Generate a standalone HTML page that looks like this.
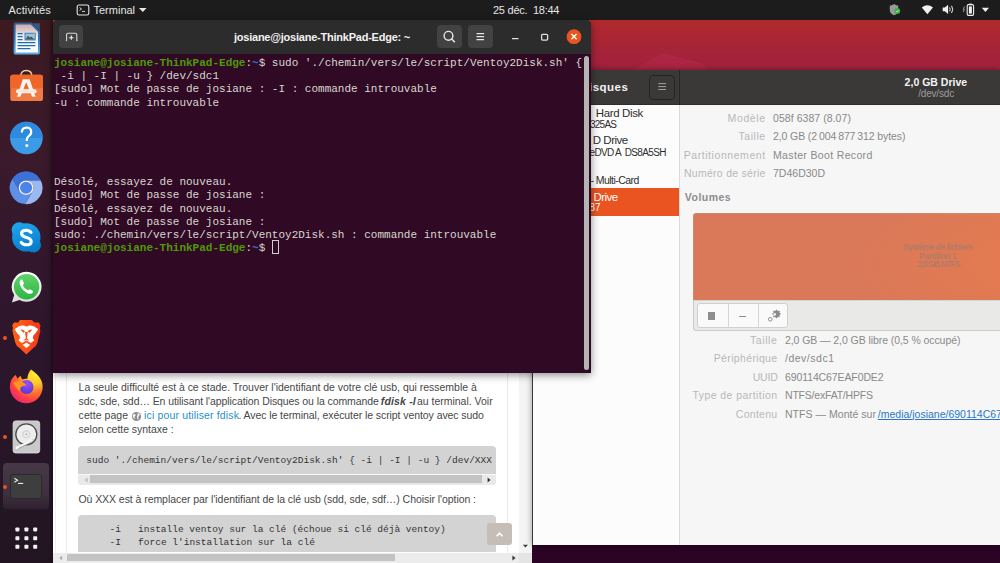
<!DOCTYPE html>
<html><head><meta charset="utf-8">
<style>
*{box-sizing:border-box;margin:0;padding:0}
html,body{width:1000px;height:563px;overflow:hidden;background:#2b0425}
body{position:relative;font-family:"Liberation Sans",sans-serif}
.a{position:absolute}
.pre{white-space:pre}
#wall{left:0;top:0;width:1000px;height:563px;background:linear-gradient(180deg,#b0292c 20px,#a82536 45px,#a1203f 70px,#8a1a45 200px,#2b0425 540px)}
#topbar{left:0;top:0;width:1000px;height:20px;background:#1c1c1c;color:#e8e8e8;font-size:11px}
#dock{left:0;top:20px;width:53px;height:543px;background:linear-gradient(180deg,#3d1a1f 0px,#3c1a25 40px,#3a1a2b 140px,#2f162d 290px,#29162a 392px,#221521 543px)}
#browser{left:53px;top:300px;width:479px;height:263px;background:#fff}
#disks{left:532px;top:70px;width:468px;height:475px;background:#f6f6f6;box-shadow:0 0 6px rgba(0,0,0,0.4)}
#term{left:53px;top:20px;width:538px;height:352.5px;background:#300a24;border-radius:5px 5px 0 0;overflow:hidden;box-shadow:0 2px 9px rgba(0,0,0,0.45)}
#thead{left:0;top:0;width:538px;height:34px;background:#2c2c2c}
.tl{position:absolute;left:1px;font-family:"Liberation Mono",monospace;font-size:11px;color:#d9d6d0;white-space:pre;line-height:13px}
.g{color:#4e9a06;font-weight:bold}
.b{color:#3f74c4;font-weight:bold}
.btn{background:#424242;border-radius:4px}
.ttl{left:0;width:538px;text-align:center;top:10px;font-size:11px;font-weight:bold;color:#f2f2f2;letter-spacing:-0.23px;line-height:14px}
.tb{top:2.8px;font-size:11px;line-height:14px;color:#e6e6e6}
.dot{left:3px;width:4px;height:4px;border-radius:2px;background:#e95420}
.P{font-size:10.5px;line-height:13px;color:#474747}
.C{font-family:"Liberation Mono",monospace;font-size:9.5px;line-height:12px;color:#343434}
.S1{font-size:11.5px;line-height:14px;color:#2e2e2e}
.S2{font-size:10px;line-height:12px;color:#2e2e2e}
.L{font-size:10.5px;line-height:13px;color:#b8b8b8}
.V{font-size:10.5px;line-height:13px;color:#898989}
.VT{font-size:8.5px;line-height:10px;font-weight:bold;color:rgba(125,125,125,0.5);filter:blur(0.35px)}
.cur{outline:1px solid #d0d0d0;outline-offset:-1px}
</style></head><body>
<div id="wall" class="a"></div>
<svg class="a" style="left:0;top:0" width="1000" height="80" viewBox="0 0 1000 80"><path d="M630 71 L663 53 L704 64 L706 71 Z" fill="#ae2845" opacity="0.8"></path></svg>
<div id="topbar" class="a">
  <div class="a pre tb" style="left:8.5px;letter-spacing:0.15px">Activités</div>
  <svg class="a" style="left:76px;top:4px" width="14" height="12" viewBox="0 0 14 12"><rect x="1.2" y="1" width="11.6" height="10" rx="1.8" fill="none" stroke="#e8e8e8" stroke-width="1.1"></rect><path d="M3.6 3.6 L5.6 5 L3.6 6.4 M6 7.4 h3" fill="none" stroke="#e8e8e8" stroke-width="0.9"></path></svg>
  <div class="a pre tb" style="left:93.5px;letter-spacing:0px">Terminal</div>
  <svg class="a" style="left:138px;top:7px" width="10" height="6" viewBox="0 0 10 6"><path d="M1 1 H8.6 L4.8 5 Z" fill="#e8e8e8"></path></svg>
  <div class="a pre tb" style="left:493px;letter-spacing:-0.25px">25 déc.  18:44</div>
  <svg class="a" style="left:886px;top:2px" width="110" height="16" viewBox="0 0 110 16">
    <path d="M8.2 2 C6.4 3.2 5 3.6 3.8 3.6 V8.2 C3.8 10.8 5.6 12.2 8.2 13.2 C10.8 12.2 12.2 10.8 12.2 8.2 V3.6 C11 3.6 9.8 3.2 8.2 2 Z" fill="#9a9a9a"></path>
    <circle cx="11.2" cy="9" r="3" fill="#3cb043"></circle><path d="M9.8 9 l1 1 l1.8 -1.8" stroke="#e8ffe8" stroke-width="0.7" fill="none"></path>
    <path d="M41.4 12.2 L35.8 5.4 Q41.4 1.2 47 5.4 Z" fill="#f0f0f0"></path>
    <path d="M56.7 5.5 h2.2 l3.2 -2.7 v9.2 l-3.2 -2.7 h-2.2 Z" fill="#f0f0f0"></path>
    <path d="M63.6 5.4 Q64.8 7.4 63.6 9.4 M65.6 3.8 Q67.8 7.4 65.6 11" fill="none" stroke="#f0f0f0" stroke-width="1"></path>
    <path d="M78.4 4.5 L77.3 7.4 L78.4 7.4 L77.3 10.2" fill="none" stroke="#cfcfcf" stroke-width="0.7"></path>
    <rect x="81.2" y="2.6" width="6.4" height="10.8" rx="1.3" fill="none" stroke="#f0f0f0" stroke-width="1.1"></rect><rect x="83" y="1.6" width="2.8" height="1.2" fill="#f0f0f0"></rect><rect x="82.9" y="4.4" width="3" height="7.2" fill="#f0f0f0"></rect>
    <path d="M95.8 5.8 H103 L99.4 10 Z" fill="#f0f0f0"></path>
  </svg>
</div>
<div id="dock" class="a">
  <div class="a" style="left:49px;top:0;width:4px;height:543px;background:linear-gradient(90deg,rgba(0,0,0,0),rgba(0,0,0,0.3))"></div>
  <!-- writer: abs x13-40 y22.5-54.6 -->
  <svg class="a" style="left:12px;top:1px" width="30" height="35" viewBox="0 0 30 35">
    <defs><linearGradient id="wg" x1="0" y1="0" x2="0" y2="1"><stop offset="0" stop-color="#c9a9ae"></stop><stop offset="0.45" stop-color="#f4eef0"></stop><stop offset="1" stop-color="#fff"></stop></linearGradient>
    <linearGradient id="wb" x1="0" y1="0" x2="0" y2="1"><stop offset="0" stop-color="#2e5f8e"></stop><stop offset="0.5" stop-color="#2a78b8"></stop><stop offset="1" stop-color="#5ab4e6"></stop></linearGradient></defs>
    <path d="M20.6 2.2 H27.8 V9.4 Z" fill="#3a5a78"></path>
    <path d="M3.6 1.6 H19.6 L28 10 V31 Q28 33.6 25.4 33.6 H4.2 Q1.6 33.6 1.6 31 V4 Q1.6 1.6 3.6 1.6 Z" fill="url(#wb)"></path>
    <path d="M4.4 3.6 H18.8 L26 10.8 V30.4 Q26 31.6 24.8 31.6 H4.8 Q3.6 31.6 3.6 30.4 V4.4 Q3.6 3.6 4.4 3.6 Z" fill="url(#wg)"></path>
    <path d="M5.6 12.6 h5 M5.6 15.6 h5 M5.6 18.6 h5 M5.6 21.6 h17.8 M5.6 24.6 h17.8 M5.6 27.6 h12.8" stroke="#1a6fb3" stroke-width="1.3"></path>
    <rect x="12.6" y="11.8" width="11" height="7.6" fill="#1f6fb0"></rect><rect x="13.4" y="12.6" width="9.4" height="6" fill="#8fc9ea"></rect>
    <path d="M13.4 18.6 L16 14.6 L17.6 16.6 L19 15.4 L22.8 18.6 Z" fill="#555"></path><circle cx="22" cy="13.4" r="0.9" fill="#f0c030"></circle>
  </svg>
  <!-- software: bag x10-42.7 y74.7-101.5, handle top 70.3 -->
  <svg class="a" style="left:9px;top:49px" width="35" height="34" viewBox="0 0 35 34">
    <path d="M11.8 7 Q11.8 1.6 17.3 1.6 Q22.8 1.6 22.8 7" fill="none" stroke="#ecd0a0" stroke-width="1.5"></path>
    <rect x="1.3" y="5.7" width="32.7" height="26.3" rx="2.6" fill="#f07a42"></rect>
    <path d="M1.3 8.3 Q1.3 5.7 3.9 5.7 H31.4 Q34 5.7 34 8.3 V19.2 H1.3 Z" fill="#ef6629"></path>
    <path d="M13.8 10.3 H20.6 L26.6 27.7 H23.1 L17.2 13.2 L11.4 27.7 H8 Z" fill="#fbf3ee"></path>
    <rect x="7" y="20.2" width="20.6" height="4" rx="2" fill="#fbf3ee"></rect>
    <path d="M9 22.2 H25.6" stroke="#f2c8b8" stroke-width="0.6"></path>
  </svg>
  <!-- help: center 26.4,138 r16.3 -->
  <svg class="a" style="left:9px;top:100px" width="36" height="36" viewBox="0 0 36 36">
    <circle cx="17.4" cy="18" r="16.3" fill="#3b9be6"></circle>
    <path d="M1.1 18 A16.3 16.3 0 0 1 33.7 18 Z" fill="#2e8ade"></path>
    <path d="M12.8 12.6 Q12.8 7.6 17.6 7.6 Q22.2 7.6 22.2 12 Q22.2 14.6 19.6 16.2 Q17.8 17.4 17.8 20 V21" fill="none" stroke="#fff" stroke-width="2.2"></path>
    <circle cx="17.8" cy="25.4" r="1.5" fill="#fff"></circle>
  </svg>
  <!-- chromium: center 26.3,187.6 r16.5 -->
  <svg class="a" style="left:9px;top:150px" width="36" height="36" viewBox="0 0 36 36">
    <path d="M10.78 21.40 L3.44 8.68 A16.4 16.4 0 0 1 31.79 10.45 L17.10 10.45 A7.3 7.3 0 0 0 10.78 21.40 Z" fill="#3e71d8"></path>
    <path d="M17.10 10.45 L31.79 10.45 A16.4 16.4 0 0 1 16.08 34.12 L23.42 21.40 A7.3 7.3 0 0 0 17.10 10.45 Z" fill="#9ab8f2"></path>
    <path d="M23.42 21.40 L16.08 34.12 A16.4 16.4 0 0 1 3.44 8.68 L10.78 21.40 A7.3 7.3 0 0 0 23.42 21.40 Z" fill="#5e90ea"></path>
    <circle cx="17.1" cy="17.75" r="6.7" fill="#4a84ea" stroke="#f4f6fb" stroke-width="1.3"></circle>
  </svg>
  <!-- skype x10.7-41.8 y222-252.4 -->
  <svg class="a" style="left:10px;top:201px" width="33" height="33" viewBox="0 0 33 33">
    <defs><linearGradient id="sk" x1="0" y1="0" x2="0.3" y2="1"><stop offset="0" stop-color="#20a8ec"></stop><stop offset="1" stop-color="#0a7fd0"></stop></linearGradient></defs>
    <circle cx="9.2" cy="8.8" r="7.6" fill="#1ca2e8"></circle>
    <circle cx="23.4" cy="24" r="7.6" fill="#0b7ccc"></circle>
    <circle cx="16.3" cy="16.4" r="14.2" fill="url(#sk)"></circle>
    <path d="M21 11.4 Q19.4 9.2 16.2 9.2 Q11.6 9.2 11.6 12.6 Q11.6 15.2 15.6 16.2 Q21.2 17.4 21.2 20.4 Q21.2 23.8 16.2 23.8 Q12.8 23.8 11.2 21.4" fill="none" stroke="#fff" stroke-width="3.1" stroke-linecap="round"></path>
  </svg>
  <!-- whatsapp x11.1-41.6 y271.9-302.4 -->
  <svg class="a" style="left:10px;top:250px" width="34" height="34" viewBox="0 0 34 34">
    <defs><linearGradient id="wa" x1="0" y1="0" x2="0" y2="1"><stop offset="0" stop-color="#62d36c"></stop><stop offset="1" stop-color="#2ab540"></stop></linearGradient>
    <linearGradient id="wb2" x1="0" y1="0" x2="0" y2="1"><stop offset="0" stop-color="#ffffff"></stop><stop offset="1" stop-color="#dcdcdc"></stop></linearGradient></defs>
    <path d="M16.6 1.8 A15 15 0 1 1 9.4 30 L1.9 32.4 L4.2 25 A15 15 0 0 1 16.6 1.8 Z" fill="url(#wb2)"></path>
    <circle cx="16.6" cy="16.75" r="12.7" fill="url(#wa)"></circle>
    <path d="M10.8 9.6 Q9 11.4 9.9 14.6 Q11.6 20.2 17.8 23.4 Q21 24.6 22.8 22.6 Q23.6 21.4 22.6 20.8 L20.2 19.4 Q19.4 19 18.9 19.7 L18.2 20.6 Q14.4 18.8 12.8 15.2 L13.6 14.3 Q14.1 13.7 13.8 13 L12.6 10.2 Q12 9.2 10.8 9.6 Z" fill="#fff"></path>
  </svg>
  <!-- brave x11.8-40.8 y318.6-354.6 -->
  <svg class="a" style="left:11px;top:298px" width="31" height="38" viewBox="0 0 31 38">
    <defs><linearGradient id="bg" x1="0" y1="0" x2="1" y2="0"><stop offset="0" stop-color="#ff6414"></stop><stop offset="0.5" stop-color="#fb4e16"></stop><stop offset="1" stop-color="#f5341c"></stop></linearGradient></defs>
    <path d="M8.7 1.9 H20.8 L23.4 4.4 L27.8 4.6 L29.6 7.6 L28.8 10 L29.4 12.4 L26.6 24.4 Q25.8 27.6 22.2 30 L15.4 36.6 L8.6 30 Q5 27.6 4.2 24.4 L1.4 12.4 L2 10 L1.2 7.6 L3 4.6 L7.4 4.4 Z" fill="url(#bg)"></path>
    <path d="M5 10.2 Q8.4 7 12.4 7.6 L15.4 8.6 L18.4 7.6 Q22.4 7 25.8 10.2 L27.2 11 L24.8 15 L22.2 17.8 L21.8 20.2 L23.4 22.2 L19.8 25 L15.4 22.4 L11 25 L7.4 22.2 L9 20.2 L8.6 17.8 L6 15 L3.6 11 Z" fill="#fff"></path>
    <path d="M11.6 27 L15.4 24.6 L19.2 27 L15.4 30 Z" fill="#fff"></path>
    <path d="M9.4 11.6 Q12 11.6 14 13 L12.6 15 Q11 13.4 9.4 11.6 Z M21.4 11.6 Q18.8 11.6 16.8 13 L18.2 15 Q19.8 13.4 21.4 11.6 Z M14 13.4 L15.4 14.2 L16.8 13.4 L16 20.6 L18.6 22.8 L15.4 22 L12.2 22.8 L14.8 20.6 Z" fill="#fb5016"></path>
  </svg>
  <!-- firefox x10-42.6 y368.6-402.8 -->
  <svg class="a" style="left:9px;top:347px" width="36" height="38" viewBox="0 0 36 38">
    <defs><radialGradient id="ff" cx="0.78" cy="0.12" r="1.05"><stop offset="0" stop-color="#fff03c"></stop><stop offset="0.3" stop-color="#ffc42a"></stop><stop offset="0.55" stop-color="#ff7030"></stop><stop offset="0.78" stop-color="#ff3a48"></stop><stop offset="1" stop-color="#e21f8e"></stop></radialGradient>
    <radialGradient id="fp" cx="0.55" cy="0.25" r="0.8"><stop offset="0" stop-color="#a04cf8"></stop><stop offset="1" stop-color="#4f3ad2"></stop></radialGradient></defs>
    <path d="M22 2.5 C27.5 6.5 33.7 11.5 33.7 19.8 A16.4 16.4 0 0 1 0.9 19.8 C0.9 14.4 3.4 10 6.8 8 L8.4 11.8 L11.4 8.7 L13.2 12.4 C15 11.6 17 11.6 18.4 11.8 C18.4 8.4 20 4.8 22 2.5 Z" fill="url(#ff)"></path>
    <circle cx="17.6" cy="20" r="6.9" fill="url(#fp)"></circle>
    <path d="M4.2 16 Q8.6 13.4 12.4 14.6 Q15.6 15.6 17.6 18.4 Q13.6 18.2 11.8 20.2 Q10.6 22.4 11.2 24.6 Q7 21.6 4.2 16 Z" fill="#ff9420"></path>
  </svg>
  <!-- disks x13.2-40 y420.4-452.8 -->
  <svg class="a" style="left:12px;top:399px" width="30" height="36" viewBox="0 0 30 36">
    <rect x="1.1" y="1.9" width="26.6" height="32.1" rx="2.6" fill="#c9c9c9" stroke="#e2e2e2" stroke-width="0.8"></rect>
    <circle cx="14.3" cy="15.3" r="10.5" fill="#ededed" stroke="#4a4a4a" stroke-width="1.3"></circle>
    <circle cx="14.3" cy="15.3" r="3.4" fill="none" stroke="#d8d8d8" stroke-width="1.6"></circle>
    <circle cx="14.3" cy="15.3" r="0.7" fill="#8a8a8a"></circle>
    <path d="M5.2 29.2 L20.2 21.8" stroke="#9a9a9a" stroke-width="2.6" stroke-linecap="round"></path>
    <path d="M5 28.7 L19.9 21.3" stroke="#fafafa" stroke-width="1.9" stroke-linecap="round"></path>
    <circle cx="5" cy="28.7" r="1.5" fill="#fafafa"></circle>
  </svg>
  <!-- terminal highlight -->
  <div class="a" style="left:3px;top:443px;width:46px;height:46px;border-radius:4px;background:linear-gradient(180deg,rgba(255,255,255,0.15),rgba(255,255,255,0.11) 70%,rgba(255,255,255,0.05))"></div>
  <div class="a" style="left:10px;top:454px;width:32px;height:25px;border-radius:3px;background:#3e3e3e;border:1px solid #2a2a2a"></div>
  <svg class="a" style="left:10px;top:454px" width="32" height="25" viewBox="0 0 32 25"><path d="M4.4 4.2 L7.6 6.2 L4.4 8.2" fill="none" stroke="#eee" stroke-width="1.1"></path><path d="M8 9.4 h5.2" stroke="#eee" stroke-width="1.1"></path></svg>
  <!-- app grid -->
  <svg class="a" style="left:13px;top:505px" width="27" height="27" viewBox="0 0 27 27">
    <g fill="#f2f2f2"><rect x="2.4" y="2.4" width="4" height="4" rx="0.8"></rect><rect x="11.4" y="2.4" width="4" height="4" rx="0.8"></rect><rect x="20.2" y="2.4" width="4" height="4" rx="0.8"></rect>
    <rect x="2.4" y="11.2" width="4" height="4" rx="0.8"></rect><rect x="11.4" y="11.2" width="4" height="4" rx="0.8"></rect><rect x="20.2" y="11.2" width="4" height="4" rx="0.8"></rect>
    <rect x="2.4" y="19.8" width="4" height="4" rx="0.8"></rect><rect x="11.4" y="19.8" width="4" height="4" rx="0.8"></rect><rect x="20.2" y="19.8" width="4" height="4" rx="0.8"></rect></g>
  </svg>
  <div class="a dot" style="top:315.5px"></div>
  <div class="a dot" style="top:415px"></div>
  <div class="a dot" style="top:464.5px"></div>
</div>
<div id="browser" class="a">
  <div class="a" style="left:1.5px;top:0;width:1px;height:263px;background:#f1f1f1"></div>
  <div class="a" style="left:13px;top:0;width:1px;height:263px;background:#e9e9e9"></div>
  <div class="a" style="left:454px;top:0;width:1px;height:263px;background:#e9e9e9"></div>
  <div class="a pre P" style="left: 25.6px; top: 80.5px; letter-spacing: -0.019px;">La seule difficulté est à ce stade. Trouver l'identifiant de votre clé usb, qui ressemble à</div>
  <div class="a pre P" style="left: 25.6px; top: 94.8px; letter-spacing: -0.083px;">sdc, sde, sdd… En utilisant l'application Disques ou la commande</div>
  <div class="a pre P" style="font-weight: bold; font-style: italic; left: 327.8px; top: 94.8px; letter-spacing: 0.151px;">fdisk -l</div>
  <div class="a pre P" style="left: 363.9px; top: 94.8px; letter-spacing: -0.005px;">au terminal. Voir</div>
  <div class="a pre P" style="left: 25.6px; top: 109.1px; letter-spacing: 0.039px;">cette page</div>
  <svg class="a" style="left:78.4px;top:110.6px" width="11" height="11" viewBox="0 0 11 11"><circle cx="5.5" cy="5.5" r="4.6" fill="#8c8c8c"></circle><path d="M2.4 3.2 Q4 2.4 4.6 3.6 Q5 5 3.6 5.6 Q3.4 7 4.4 8.2 Q2 7.4 1.6 5 Z M6.4 1.4 Q8.6 2.4 9 4 Q7.8 4.6 7.4 6 Q8 7.6 7 9 Q6 8 6.2 6.4 Q5.4 5.6 6.4 4.2 Q7 3 6.4 1.4 Z" fill="#f4f4f4"></path></svg>
  <div class="a pre P" style="color: rgb(42, 143, 199); left: 91px; top: 109.1px; letter-spacing: 0.153px;">ici pour utiliser fdisk</div>
  <div class="a pre P" style="left: 185.4px; top: 109.1px; letter-spacing: -0.076px;">. Avec le terminal, exécuter le script ventoy avec sudo</div>
  <div class="a pre P" style="left: 25.6px; top: 123.4px; letter-spacing: -0.037px;">selon cette syntaxe :</div>
  <div class="a" style="left:25px;top:146px;width:418px;height:39px;background:#d3d3d3;border-radius:4px;overflow:hidden">
    <div class="a" style="left:0;top:27.5px;width:418px;height:11.5px;background:#e9e9e9;border-top:1px solid #f7f7f7"></div>
    <div class="a" style="left:12px;top:28.8px;width:392px;height:8.6px;background:#c3c3c3"></div>
    <svg class="a" style="left:3px;top:28.5px" width="412" height="10" viewBox="0 0 412 10"><path d="M6.6 2.6 L3.6 5 L6.6 7.4 Z" fill="#bcbcbc"></path><path d="M406.6 2.6 L409.6 5 L406.6 7.4 Z" fill="#333"></path></svg>
  </div>
  <div class="a pre C" style="left: 33.3px; top: 154.8px; letter-spacing: 0.013px;">sudo './chemin/vers/le/script/Ventoy2Disk.sh' { -i | -I | -u } /dev/XXX</div>
  <div class="a pre P" style="left: 25.4px; top: 193.4px; letter-spacing: -0.056px;">Où XXX est à remplacer par l'identifiant de la clé usb (sdd, sde, sdf…) Choisir l'option :</div>
  <div class="a" style="left:25px;top:215px;width:418px;height:36.6px;background:#d3d3d3;border-radius:4px 4px 0 0"></div>
  <div class="a pre C" style="left: 56.6px; top: 223.6px; letter-spacing: -0.004px;">-i   installe ventoy sur la clé (échoue si clé déjà ventoy)</div>
  <div class="a pre C" style="left: 56.6px; top: 236.8px;">-I   force l'installation sur la clé</div>
  <div class="a" style="left:434px;top:223px;width:24.5px;height:21.5px;background:#c6bdb7;border-radius:3px"></div>
  <svg class="a" style="left:434px;top:223px" width="25" height="22" viewBox="0 0 25 22"><path d="M9.6 13.2 L12.6 10.2 L15.6 13.2" fill="none" stroke="#fff" stroke-width="1.6"></path></svg>
  <div class="a" style="left:466px;top:0;width:13px;height:252.5px;background:#f4f4f4"></div>
  <svg class="a" style="left:466px;top:240px" width="13" height="12" viewBox="0 0 13 12"><path d="M3.8 4.8 H9 L6.4 7.6 Z" fill="#3a3a3a"></path></svg>
  <div class="a" style="left:0;top:252.5px;width:466px;height:10.5px;background:#ececec"></div>
  <div class="a" style="left:14px;top:253.6px;width:328px;height:7.6px;background:#c3c3c3"></div>
  <svg class="a" style="left:0;top:252.5px" width="466" height="11" viewBox="0 0 466 11"><path d="M9.2 2.4 L6.2 5 L9.2 7.6 Z" fill="#b0b0b0"></path><path d="M459.4 2.4 L462.6 5 L459.4 7.6 Z" fill="#3a3a3a"></path></svg>
  <div class="a" style="left:466px;top:252.5px;width:13px;height:10.5px;background:#e4e4e4"></div>
</div>
<div id="disks" class="a">
  <div class="a" style="left:0;top:0;width:468px;height:35px;background:#3b3938;border-bottom:1px solid #2e2d2c"></div>
  <div class="a" style="left:147px;top:0;width:1px;height:35px;background:#262626"></div>
  <div class="a pre" style="font-size: 11.5px; line-height: 14px; font-weight: bold; color: rgb(242, 242, 242); left: 57px; top: 9.8px; letter-spacing: 0.472px;">isques</div>
  <div class="a" style="left:116.6px;top:5.1px;width:26.2px;height:24.6px;border:1px solid #252423;border-radius:4px;background:#3b3938"></div>
  <svg class="a" style="left:116.6px;top:5.1px" width="27" height="25" viewBox="0 0 27 25"><path d="M9.3 8.6 h7.7 M9.3 11.6 h7.7 M9.3 14.5 h7.7" stroke="#a0a0a0" stroke-width="1"></path></svg>
  <div class="a pre" style="font-size: 10.5px; line-height: 14px; font-weight: bold; color: rgb(244, 244, 244); left: 372.6px; top: 4.6px; letter-spacing: 0.013px;">2,0 GB Drive</div>
  <div class="a pre" style="font-size: 10px; line-height: 13px; color: rgb(156, 156, 156); left: 386.2px; top: 17.2px; letter-spacing: -0.179px;">/dev/sdc</div>
  <div class="a" style="left:0;top:35px;width:148px;height:440px;background:#fcfcfc;border-right:1px solid #dadada"></div>
  <div class="a" style="left:0;top:0;width:1px;height:475px;background:#383838"></div>
  <div class="a pre S1" style="left: 63.7px; top: 36.3px; letter-spacing: -0.361px;">Hard Disk</div>
  <div class="a pre S2" style="left: 58px; top: 48.8px; letter-spacing: -0.758px;">325AS</div>
  <div class="a pre S1" style="left: 60.8px; top: 63.4px; letter-spacing: -0.491px;">D Drive</div>
  <div class="a pre S2" style="left: 57.5px; top: 76.6px; letter-spacing: -0.661px;">eDVD A  DS8A5SH</div>
  <div class="a pre S2" style="font-size: 10.5px; left: 58.5px; top: 104px; letter-spacing: -0.549px;">- Multi-Card</div>
  <div class="a" style="left:0;top:118.4px;width:147px;height:27.6px;background:#e95420"></div>
  <div class="a pre S1" style="color: rgb(255, 255, 255); left: 61.4px; top: 120px; letter-spacing: -0.511px;">Drive</div>
  <div class="a pre S2" style="color: rgb(255, 255, 255); left: 57.5px; top: 132px;">87</div>
  <div class="a pre L" style="left: 195.606px; top: 42px; letter-spacing: 0.609px;">Modèle</div>
  <div class="a pre V" style="left: 241px; top: 42px; letter-spacing: 0.056px;">058f 6387 (8.07)</div>
  <div class="a pre L" style="left: 206.45px; top: 60.3px; letter-spacing: 0.552px;">Taille</div>
  <div class="a pre V" style="left: 241px; top: 60.3px; letter-spacing: -0.108px;">2,0 GB (2 004 877 312 bytes)</div>
  <div class="a pre L" style="left: 151.731px; top: 78.8px; letter-spacing: 0.561px;">Partitionnement</div>
  <div class="a pre V" style="left: 241px; top: 78.8px; letter-spacing: 0.349px;">Master Boot Record</div>
  <div class="a pre L" style="left: 152.028px; top: 96.8px; letter-spacing: 0.27px;">Numéro de série</div>
  <div class="a pre V" style="left: 241px; top: 96.8px; letter-spacing: 0.007px;">7D46D30D</div>
  <div class="a pre" style="font-size: 10.5px; line-height: 13px; font-weight: bold; color: rgb(141, 141, 141); left: 152.8px; top: 120.8px; letter-spacing: 0.486px;">Volumes</div>
  <div class="a" style="left:161.4px;top:142.8px;width:320px;height:88.4px;background:radial-gradient(ellipse 260px 90px at 400px 50px,#ec7a4e 0%,#e27a52 45%,#d9795a 100%);border:1px solid #c98a70;border-bottom:none;border-radius:3px 0 0 0"></div>
  <div class="a" style="left:161.4px;top:230.4px;width:320px;height:30.6px;background:#e9e9e8;border:1px solid #cbcbcb;border-top:1px solid #d5d5d5;border-radius:0 0 0 3px"></div>
  <div class="a" style="left:164.5px;top:233.3px;width:91.6px;height:25.2px;background:#fafafa;border:1px solid #d0d0d0;border-radius:3px"></div>
  <div class="a" style="left:195.7px;top:234px;width:1px;height:24px;background:#d6d6d6"></div>
  <div class="a" style="left:226.1px;top:234px;width:1px;height:24px;background:#d6d6d6"></div>
  <div class="a" style="left:175.8px;top:242.2px;width:7.6px;height:7.4px;background:#8e8e8e"></div>
  <div class="a" style="left:206.5px;top:245.8px;width:7.8px;height:1px;background:#8e8e8e"></div>
  <svg class="a" style="left:234px;top:238px" width="16" height="16" viewBox="0 0 16 16"><g fill="#8a8a8a"><path d="M8.6 2.2 h1.8 l0.3 1.3 l1.2 0.5 l1.1 -0.8 l1.3 1.3 l-0.8 1.1 l0.5 1.2 l1.3 0.3 v1.8 l-1.3 0.3 l-0.5 1.2 l0.8 1.1 l-1.3 1.3 l-1.1 -0.8 l-1.2 0.5 l-0.3 1.3 h-1.8 l-0.3 -1.3 l-1.2 -0.5 l-1.1 0.8 l-1.3 -1.3 l0.8 -1.1 l-0.5 -1.2 l-1.3 -0.3 v-1.8 l1.3 -0.3 l0.5 -1.2 l-0.8 -1.1 l1.3 -1.3 l1.1 0.8 l1.2 -0.5 Z" transform="translate(1.2 0.2) scale(0.72) translate(3.4 0)"></path></g><circle cx="8.7" cy="6.4" r="1.3" fill="#f4f4f4"></circle><circle cx="4.3" cy="11.3" r="1.8" fill="none" stroke="#8a8a8a" stroke-width="1"></circle></svg>
  <div class="a pre VT" style="left: 371.4px; top: 172.2px; letter-spacing: -0.548px;">Système de fichiers</div>
  <div class="a pre VT" style="left: 387.6px; top: 180.6px; letter-spacing: -0.396px;">Partition 1</div>
  <div class="a pre VT" style="left: 385.8px; top: 189px; letter-spacing: -0.848px;">2,0 GB NTFS</div>
  <div class="a pre L" style="left: 217.891px; top: 264.2px; letter-spacing: 0.613px;">Taille</div>
  <div class="a pre V" style="left: 253px; top: 264.2px; letter-spacing: -0.074px;">2,0 GB — 2,0 GB libre (0,5 % occupé)</div>
  <div class="a pre L" style="left: 181.75px; top: 282.4px; letter-spacing: 0.35px;">Périphérique</div>
  <div class="a pre V" style="left: 253px; top: 282.4px; letter-spacing: 0.506px;">/dev/sdc1</div>
  <div class="a pre L" style="left: 220.719px; top: 301px; letter-spacing: -0.224px;">UUID</div>
  <div class="a pre V" style="left: 253px; top: 301px; letter-spacing: -0.108px;">690114C67EAF0DE2</div>
  <div class="a pre L" style="left: 160.469px; top: 319.2px; letter-spacing: 0.435px;">Type de partition</div>
  <div class="a pre V" style="left: 253px; top: 319.2px; letter-spacing: -0.202px;">NTFS/exFAT/HPFS</div>
  <div class="a pre L" style="left: 203.812px; top: 337.8px; letter-spacing: 0.283px;">Contenu</div>
  <div class="a pre V" style="left: 253px; top: 337.8px; letter-spacing: 0.037px;">NTFS — Monté sur</div>
  <div class="a pre V" style="color: rgb(42, 118, 198); text-decoration: underline; left: 345.8px; top: 337.8px;">/media/josiane/690114C67EAF0DE2</div>
</div>
<div id="term" class="a">
  <div class="a" style="left:531px;top:36.2px;width:5px;height:314px;border-radius:2.5px;background:#b4b4b4"></div>
  <div class="a" style="left:218.6px;top:220px;width:7.6px;height:13.6px;border:1px solid #cfcfcf"></div>
  <div id="thead" class="a">
    <div class="a btn" style="left:6px;top:5px;width:24px;height:23px"><svg class="a" style="left:0;top:0" width="24" height="23" viewBox="0 0 24 23"><path d="M7.6 15.6 V9.6 Q7.6 8.3 8.9 8.3 H16.5 Q17.8 8.3 17.8 9.6 V15.6" fill="none" stroke="#d8d8d8" stroke-width="1.1"></path><path d="M6.9 15.6 h1 M17.4 15.6 h1" stroke="#e0e0e0" stroke-width="1"></path><path d="M12.3 10.6 v4.2 M10.2 12.7 h4.2" stroke="#f4f4f4" stroke-width="1.1"></path></svg></div>
    <div class="a pre ttl">josiane@josiane-ThinkPad-Edge: ~</div>
    <div class="a btn" style="left:384px;top:5px;width:25px;height:23px"><svg class="a" style="left:0;top:0" width="25" height="23" viewBox="0 0 25 23"><circle cx="11.5" cy="10.8" r="4.4" fill="none" stroke="#e6e6e6" stroke-width="1.4"></circle><path d="M14.6 14 L17.4 16.8" stroke="#e6e6e6" stroke-width="1.6" stroke-linecap="round"></path></svg></div>
    <div class="a btn" style="left:415px;top:5px;width:25px;height:23px"><svg class="a" style="left:0;top:0" width="25" height="23" viewBox="0 0 25 23"><path d="M8.5 8.7 h7.6 M8.5 11.6 h7.6 M8.5 14.6 h7.6" stroke="#e6e6e6" stroke-width="1.2"></path></svg></div>
    <svg class="a" style="left:450px;top:5px" width="88" height="24" viewBox="0 0 88 24"><path d="M9 13.6 h6.5" stroke="#e0e0e0" stroke-width="1.2"></path><rect x="38.6" y="9.3" width="6" height="5.8" rx="1" fill="none" stroke="#e0e0e0" stroke-width="1.3"></rect><circle cx="71" cy="11.7" r="7.4" fill="#e95420"></circle><path d="M68.4 9.1 L73.6 14.3 M73.6 9.1 L68.4 14.3" stroke="#fff" stroke-width="1.4"></path></svg>
  </div>
  <div class="tl" style="top:36.87px"><span class="g">josiane@josiane-ThinkPad-Edge</span>:<span class="b">~</span>$ sudo './chemin/vers/le/script/Ventoy2Disk.sh' {</div>
  <div class="tl" style="top:50.12px"> -i | -I | -u } /dev/sdc1</div>
  <div class="tl" style="top:63.37px">[sudo] Mot de passe de josiane : -I : commande introuvable</div>
  <div class="tl" style="top:76.62px">-u : commande introuvable</div>
  <div class="tl" style="top:156.12px">Désolé, essayez de nouveau.</div>
  <div class="tl" style="top:169.37px">[sudo] Mot de passe de josiane : </div>
  <div class="tl" style="top:182.62px">Désolé, essayez de nouveau.</div>
  <div class="tl" style="top:195.87px">[sudo] Mot de passe de josiane : </div>
  <div class="tl" style="top:209.12px">sudo: ./chemin/vers/le/script/Ventoy2Disk.sh : commande introuvable</div>
  <div class="tl" style="top:222.37px"><span class="g">josiane@josiane-ThinkPad-Edge</span>:<span class="b">~</span>$ </div>
</div>

</body></html>
